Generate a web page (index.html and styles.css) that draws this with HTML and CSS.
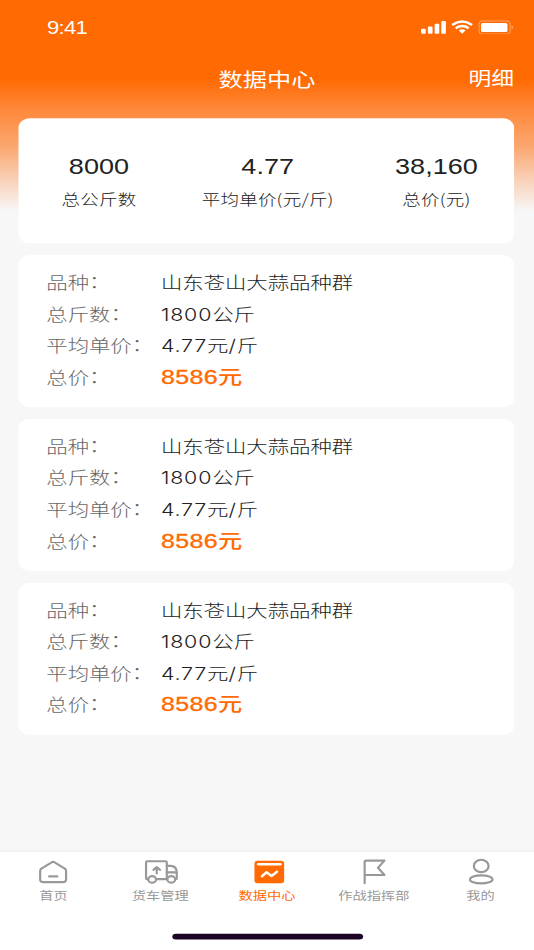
FILE: index.html
```html
<!DOCTYPE html>
<html lang="zh-CN">

<head>
    <meta charset="UTF-8">
    <meta name="viewport" content="width=device-width, initial-scale=1.0">
    <title>数据中心</title>

    <link rel="stylesheet" href="styles.css">
</head>

<body>
    <div class="phone">
        <header class="top">
            <div class="status-bar">
                <span class="time">9:41</span>
                <svg class="status-icons" viewBox="0 0 94 16" preserveAspectRatio="none">
                    <g fill="#fff">
                        <rect x="1" y="10" width="4.6" height="5" rx="1" />
                        <rect x="7.8" y="7.7" width="4.6" height="7.3" rx="1" />
                        <rect x="14.5" y="5" width="4.6" height="10" rx="1" />
                        <rect x="21.1" y="2.3" width="4.6" height="12.7" rx="1" />
                        <path d="M38.4 11.4 C40.5 10.2 43.3 10.2 45.4 11.4 L41.9 15 Z" />
                        <rect x="60.7" y="4.3" width="26.3" height="9" rx="1.5" />
                        <path d="M91.2 6.5 Q93.6 8.7 91.2 10.9 Z" opacity=".5" />
                    </g>
                    <g fill="none" stroke="#fff">
                        <path d="M32 6.2 Q41.9 -0.6 51.8 6.2" stroke-width="2.5" />
                        <path d="M35.4 9.5 Q41.9 5 48.4 9.5" stroke-width="2.3" />
                        <rect x="58.7" y="2.3" width="31" height="13" rx="3.6" opacity=".4" />
                    </g>
                </svg>
            </div>
            <div class="nav">
                <h1>数据中心</h1>
                <a class="detail">明细</a>
            </div>
        </header>

        <main>
            <section class="card summary">
                <div class="item">
                    <p class="num">8000</p>
                    <p class="name">总公斤数</p>
                </div>
                <div class="item">
                    <p class="num">4.77</p>
                    <p class="name">平均单价(元/斤)</p>
                </div>
                <div class="item">
                    <p class="num">38,160</p>
                    <p class="name">总价(元)</p>
                </div>
            </section>

            <section class="card record">
                <div class="row"><span class="label">品种<i>：</i></span><span>山东苍山大蒜品种群</span></div>
                <div class="row"><span class="label">总斤数<i>：</i></span><span><b>1800</b>公斤</span></div>
                <div class="row"><span class="label">平均单价<i>：</i></span><span><b>4.77</b>元<b>/</b>斤</span></div>
                <div class="row"><span class="label">总价<i>：</i></span><span class="total"><b>8586</b>元</span></div>
            </section>

            <section class="card record">
                <div class="row"><span class="label">品种<i>：</i></span><span>山东苍山大蒜品种群</span></div>
                <div class="row"><span class="label">总斤数<i>：</i></span><span><b>1800</b>公斤</span></div>
                <div class="row"><span class="label">平均单价<i>：</i></span><span><b>4.77</b>元<b>/</b>斤</span></div>
                <div class="row"><span class="label">总价<i>：</i></span><span class="total"><b>8586</b>元</span></div>
            </section>

            <section class="card record">
                <div class="row"><span class="label">品种<i>：</i></span><span>山东苍山大蒜品种群</span></div>
                <div class="row"><span class="label">总斤数<i>：</i></span><span><b>1800</b>公斤</span></div>
                <div class="row"><span class="label">平均单价<i>：</i></span><span><b>4.77</b>元<b>/</b>斤</span></div>
                <div class="row"><span class="label">总价<i>：</i></span><span class="total"><b>8586</b>元</span></div>
            </section>
        </main>

        <footer>
            <nav class="tabs">
                <a class="tab">
                    <svg class="icon" viewBox="0 0 40 30" preserveAspectRatio="none">
                        <path d="M6 14.8 Q6 12.8 7.7 11.9 L17.5 6 Q19 5 20.5 6 L30.3 11.9 Q32 12.8 32 14.8 V22.8 Q32 25.8 28.7 25.8 H9.3 Q6 25.8 6 22.8 Z" />
                        <path d="M15 20 H23.2" />
                    </svg>
                    <span>首页</span>
                </a>
                <a class="tab">
                    <svg class="icon" viewBox="0 0 40 30" preserveAspectRatio="none">
                        <path d="M7.3 22.8 H6.3 Q5.1 22.8 5.1 21.6 V6 Q5.1 4.8 6.3 4.8 H24.7 Q25.9 4.8 25.9 6 V22.8 H15" />
                        <path d="M25.9 9.4 H29.7 Q35.9 9.6 35.9 16 V22 Q35.9 22.8 34.2 22.8 M25.9 16 H35.7" />
                        <ellipse cx="11.2" cy="23" rx="3.9" ry="3.3" />
                        <ellipse cx="30.4" cy="23" rx="3.9" ry="3.3" />
                        <path d="M15.8 17 V10.8 M12.5 13.4 L15.8 10.6 L19.1 13.4" />
                    </svg>
                    <span>货车管理</span>
                </a>
                <a class="tab active">
                    <svg class="icon" viewBox="0 0 40 30" preserveAspectRatio="none">
                        <rect class="fill" x="6.7" y="4.3" width="29.8" height="22.6" rx="3" />
                        <path class="line" d="M10.5 7.9 H32.8" />
                        <path class="line" d="M14.2 19.8 L18.9 15.8 L23.8 19.5 L29.3 15.4" />
                    </svg>
                    <span>数据中心</span>
                </a>
                <a class="tab">
                    <svg class="icon" viewBox="0 0 40 30" preserveAspectRatio="none">
                        <path d="M10.1 26.8 V5.6 Q10.1 4.2 11.6 4.2 H30 L23.5 11.4 L30 18.6 H10.3" />
                    </svg>
                    <span>作战指挥部</span>
                </a>
                <a class="tab">
                    <svg class="icon" viewBox="0 0 40 30" preserveAspectRatio="none">
                        <ellipse cx="19.9" cy="9.5" rx="7.4" ry="6.2" />
                        <ellipse cx="19.9" cy="23" rx="11.3" ry="4" />
                    </svg>
                    <span>我的</span>
                </a>
            </nav>
            <div class="home-bar"></div>
        </footer>
    </div>
</body>

</html>
```
FILE: styles.css
```css
* {
    margin: 0;
    padding: 0;
    box-sizing: border-box;
}

body {
    height: 950px;
    overflow: hidden;
    background-color: #f7f7f7;
}

/* 375 x 812 layout stretched over the whole window */
.phone {
    width: 375px;
    height: 812px;
    display: flex;
    flex-direction: column;
    transform: scale(1.424, 1.17);
    transform-origin: 0 0;
    background: linear-gradient(#ff6a03 0, #ff6a03 68px, #ff883a 93px, #fba66e 125px, #f9d3bc 155px, #f7f7f7 181px);
    font-family: "Liberation Sans", "Noto Sans CJK SC", sans-serif;
    color: #222;
}

.top {
    height: 101px;
    color: #fff;
}

.status-bar {
    height: 47px;
    display: flex;
    justify-content: space-between;
    align-items: center;
    padding: 0 14px 0 33px;
}

.time {
    font-size: 15.5px;
    letter-spacing: -0.5px;
}

.status-icons {
    width: 66.3px;
    height: 13.7px;
    margin-bottom: 2px;
}

.nav {
    height: 38px;
    display: grid;
    grid-template-columns: 1fr auto 1fr;
    align-items: center;
    padding: 0 14px;
}

.nav h1 {
    grid-column: 2;
    font-size: 17px;
    font-weight: 400;
}

.detail {
    justify-self: end;
    font-size: 16px;
}

main {
    flex: 1;
    display: flex;
    flex-direction: column;
    gap: 10px;
    padding: 0 14px 0 13px;
}

.card {
    background-color: #fff;
    border-radius: 8px;
}

.summary {
    height: 107px;
    display: grid;
    grid-template-columns: repeat(3, 118.5px);
    justify-content: center;
    padding: 28px 0 0 2px;
    text-align: center;
}

.num {
    font-size: 19px;
    line-height: 27px;
}

.name {
    font-family: "Noto Sans CJK SC", sans-serif;
    font-size: 13px;
    font-weight: 300;
    line-height: 27px;
    letter-spacing: 0.15px;
}

.record {
    height: 130px;
    padding: 10.4px 19.5px;
    font-size: 15px;
    font-weight: 300;
}

.row {
    display: flex;
    height: 27px;
    line-height: 27px;
}

.row b {
    font-family: "Inter", sans-serif;
    font-size: 15px;
    font-weight: 300;
    letter-spacing: 0.6px;
}

.label {
    width: 80.5px;
    color: #666;
}

.label i {
    font-style: normal;
    line-height: 1;
    vertical-align: 0.8px;
}

.total {
    font-size: 17px;
    font-weight: 500;
    color: #ff6a03;
}

.row .total b {
    font-family: "Liberation Sans", sans-serif;
    font-size: 17.5px;
    font-weight: 400;
    letter-spacing: 0.3px;
    -webkit-text-stroke: 0.3px #ff6a03;
}

footer {
    height: 85px;
    background-color: #fff;
    border-top: 1px solid #e9e9f2;
}

.tabs {
    display: grid;
    grid-template-columns: repeat(5, 1fr);
    padding-top: 4.2px;
}

.tab {
    display: flex;
    flex-direction: column;
    align-items: center;
    gap: 0.8px;
    font-size: 10px;
    line-height: 14px;
    color: #999;
}

.icon {
    width: 28px;
    height: 25.6px;
    fill: none;
    stroke: #999;
    stroke-width: 2.2;
    stroke-linecap: round;
    stroke-linejoin: round;
}

.active {
    color: #ff6a03;
}

.active .fill {
    fill: #ff6a03;
    stroke: none;
}

.active .line {
    stroke: #fff;
    stroke-width: 2.5;
}

.home-bar {
    width: 134px;
    height: 5px;
    margin: 25.5px auto 0;
    border-radius: 3px;
    background-color: #1b0424;
}
```
